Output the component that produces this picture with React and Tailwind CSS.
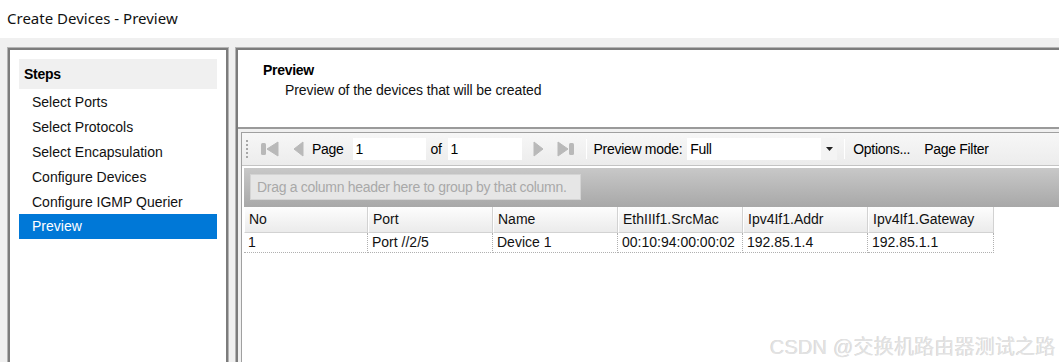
import React from "react";

const F = { fontFamily: '"Liberation Sans", Arial, sans-serif' };

function First() {
  return (
    <svg width="22" height="18" viewBox="0 0 22 18">
      <rect x="1" y="3" width="5" height="12" rx="1.5" fill="#b9b9b9" />
      <path d="M18 2 L18 16 L7 9 Z" fill="#b9b9b9" stroke="#b9b9b9" strokeLinejoin="round" strokeWidth="1" />
    </svg>
  );
}
function Prev() {
  return (
    <svg width="14" height="18" viewBox="0 0 14 18">
      <path d="M11 2 L11 16 L2 9 Z" fill="#b9b9b9" stroke="#b9b9b9" strokeLinejoin="round" strokeWidth="1" />
    </svg>
  );
}
function Next() {
  return (
    <svg width="14" height="18" viewBox="0 0 14 18">
      <path d="M3 2 L3 16 L12 9 Z" fill="#b9b9b9" stroke="#b9b9b9" strokeLinejoin="round" strokeWidth="1" />
    </svg>
  );
}
function Last() {
  return (
    <svg width="20" height="18" viewBox="0 0 20 18">
      <path d="M3 2 L3 16 L13 9 Z" fill="#b9b9b9" stroke="#b9b9b9" strokeLinejoin="round" strokeWidth="1" />
      <rect x="14" y="3" width="5" height="12" rx="1.5" fill="#b9b9b9" />
    </svg>
  );
}

const cols = [
  { h: "No", v: "1", w: "w-[124px]" },
  { h: "Port", v: "Port //2/5", w: "w-[125px]" },
  { h: "Name", v: "Device 1", w: "w-[125px]" },
  { h: "EthIIIf1.SrcMac", v: "00:10:94:00:00:02", w: "w-[125px]" },
  { h: "Ipv4If1.Addr", v: "192.85.1.4", w: "w-[125px]" },
  { h: "Ipv4If1.Gateway", v: "192.85.1.1", w: "w-[126px]" },
];

const steps = [
  "Select Ports",
  "Select Protocols",
  "Select Encapsulation",
  "Configure Devices",
  "Configure IGMP Querier",
];

export default function App() {
  return (
    <div className="relative w-[1059px] h-[362px] overflow-hidden bg-[#f0f0f0] text-black" style={F}>
      <div
        className="h-[38px] bg-white flex items-center pl-[7px] pb-px text-[15px] text-[#111]"
        style={{ fontFamily: '"Noto Sans", "Open Sans", sans-serif' }}
      >
        Create Devices - Preview
      </div>
      <div className="flex pt-[9px] pl-[7px] gap-[6px] h-[324px]">
        {/* Left steps panel */}
        <div className="w-[222px] h-[330px] border border-[#b4b4b4] shrink-0">
          <div className="h-full border-2 border-[#7c7c7c] bg-white pt-[9px] px-[9px]">
            <div className="h-[30px] bg-[#f0f0f0] flex items-center pl-[5px] text-[14px] font-bold tracking-[-0.3px]">
              Steps
            </div>
            <div className="flex flex-col text-[14px] text-[#111]">
              {steps.map((s) => (
                <div key={s} className="h-[25px] flex items-center pl-[13px] pt-[1px]">
                  {s}
                </div>
              ))}
              <div className="h-[25px] flex items-center pl-[13px] bg-[#0078d7] text-white">
                Preview
              </div>
            </div>
          </div>
        </div>
        {/* Right panel */}
        <div className="flex-1 h-[330px] border border-[#b4b4b4] border-r-0">
          <div className="h-full border-2 border-r-0 border-[#7c7c7c] bg-white flex flex-col">
            <div className="h-[77px] pl-[25px] pt-[11px] shrink-0">
              <div className="text-[14px] leading-[18px] font-bold tracking-[-0.3px]">Preview</div>
              <div className="text-[14px] leading-[18px] pl-[22px] mt-[2px] tracking-[-0.1px] text-[#111]">
                Preview of the devices that will be created
              </div>
            </div>
            <div className="flex-1 border-t-2 border-[#9a9a9a] bg-[#f0f0f0] pt-[3px] pl-[3px] flex flex-col">
              <div className="flex-1 border-l border-t border-[#a0a0a0] bg-white flex flex-col">
                {/* toolbar */}
                <div className="h-[33px] bg-gradient-to-b from-[#f7f7f7] to-[#ececec] border-b border-[#c4c4c4] flex items-center text-[14px] tracking-[-0.3px] shrink-0">
                  <div className="w-[4px] ml-[4px] flex flex-col gap-[2px] mr-[10px]">
                    {[0, 1, 2, 3, 4].map((i) => (
                      <div key={i} className="w-[2px] h-[2px] bg-[#a8a8a8]" />
                    ))}
                  </div>
                  <First />
                  <div className="w-[10px]" />
                  <Prev />
                  <span className="ml-[6px]">Page</span>
                  <div className="ml-[9px] w-[73px] h-[22px] bg-white flex items-center pl-[3px]">1</div>
                  <span className="ml-[5px]">of</span>
                  <div className="ml-[6px] w-[74px] h-[22px] bg-white flex items-center pl-[3px]">1</div>
                  <div className="ml-[9px]"><Next /></div>
                  <div className="ml-[10px]"><Last /></div>
                  <div className="ml-[11px] w-px h-[20px] bg-[#c0c0c0] border-r border-white" />
                  <span className="ml-[7px]">Preview mode:</span>
                  <div className="ml-[5px] w-[150px] h-[22px] bg-white flex items-center pl-[3px] relative">
                    Full
                    <div className="absolute right-0 top-0 w-[16px] h-[22px] bg-[#f4f4f4] flex items-center justify-center">
                      <svg width="7" height="4" viewBox="0 0 7 4">
                        <path d="M0 0 H7 L3.5 4 Z" fill="#222" />
                      </svg>
                    </div>
                  </div>
                  <div className="ml-[7px] w-px h-[20px] bg-[#c0c0c0] border-r border-white" />
                  <span className="ml-[8px]">Options...</span>
                  <span className="ml-[14px]">Page Filter</span>
                </div>
                {/* grid */}
                <div className="flex-1 pt-[2px] pl-[2px] bg-white">
                  <div className="h-[39px] bg-gradient-to-b from-[#c8c8c8] to-[#a8a8a8] pt-[6px] pl-[6px]">
                    <div className="w-[331px] h-[26px] bg-[#e6e6e6] border border-[#d4d4d4] flex items-center pl-[6px] text-[14px] text-[#a9a9a9] tracking-[-0.3px]">
                      Drag a column header here to group by that column.
                    </div>
                  </div>
                  <div className="flex">
                    {cols.map((c) => (
                      <div
                        key={c.h}
                        className={`${c.w} h-[26px] bg-gradient-to-b from-[#fdfdfd] to-[#ebebeb] border-r border-b border-[#d2d2d2] border-l border-l-white flex items-center pl-[4px] text-[14px] text-[#111]`}
                      >
                        {c.h}
                      </div>
                    ))}
                  </div>
                  <div className="flex">
                    {cols.map((c) => (
                      <div
                        key={c.h}
                        className={`${c.w} h-[20px] border-r border-b border-dotted border-[#b0b0b0] flex items-center pl-[4px] text-[14px] text-[#111]`}
                      >
                        {c.v}
                      </div>
                    ))}
                  </div>
                </div>
              </div>
            </div>
          </div>
        </div>
      </div>
      <div
        className="absolute left-[770px] top-[332px] text-[20px] text-[#e2e2e2] whitespace-nowrap tracking-[0.2px]"
        style={{
          fontFamily: '"Liberation Sans", "Noto Sans CJK SC", sans-serif',
          textShadow: "1px 1px 0 #ffffff, -0.5px -0.5px 0 #cfcfcf",
        }}
      >
        CSDN @交换机路由器测试之路
      </div>
    </div>
  );
}
